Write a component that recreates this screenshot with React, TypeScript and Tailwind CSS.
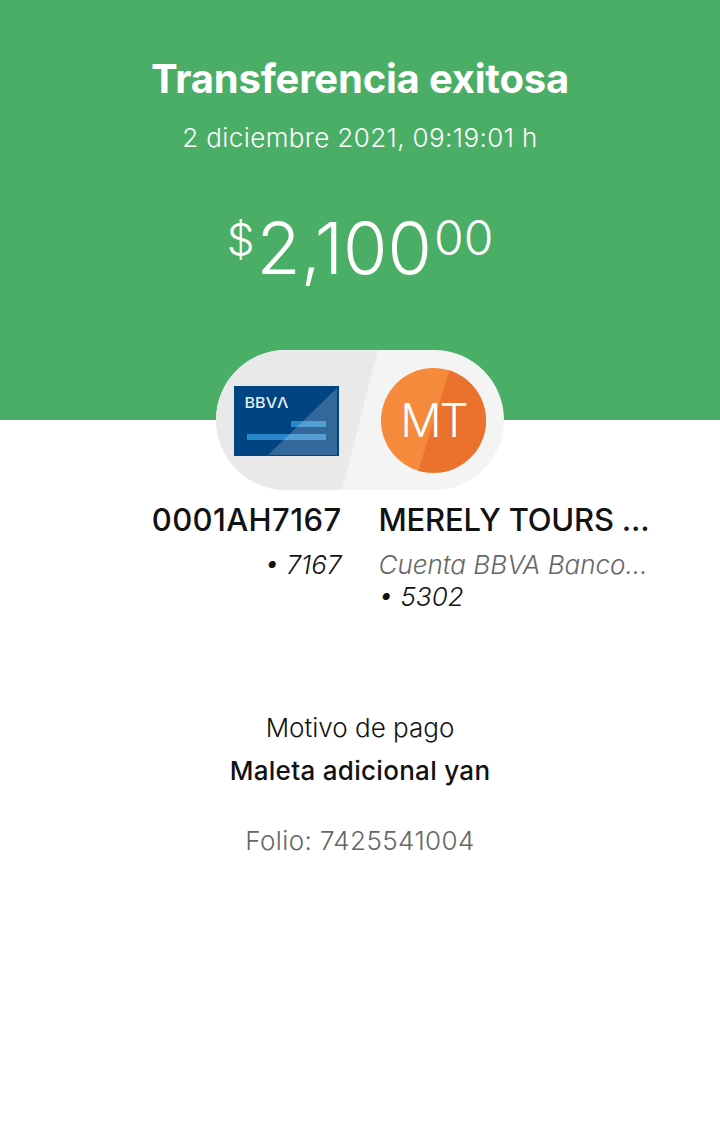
const sans = "font-['Inter','Liberation_Sans',sans-serif]";

function BankCard() {
  return (
    <svg width="105" height="70" viewBox="0 0 105 70" className="block">
      <rect width="105" height="70" fill="#004481" />
      <rect x="13" y="48" width="79" height="6" fill="#2a86ca" />
      <rect x="57" y="35" width="35" height="6" fill="#2a86ca" />
      <path d="M33 70 L103 2 V69 H33 Z" fill="#fff" fillOpacity="0.2" />
      <text x="10.5" y="22" fill="#e3edf6" fontSize="15" fontWeight="500" fontFamily="Inter, sans-serif" textLength="44" lengthAdjust="spacingAndGlyphs">
        BBVΛ
      </text>
    </svg>
  );
}

function Avatar() {
  return (
    <div className="relative flex h-[105px] w-[105px] items-center justify-center overflow-hidden rounded-full bg-[#f58a3c]">
      <div className="absolute inset-0 bg-[#ea722d] [clip-path:polygon(66%_0,100%_0,100%_100%,35%_100%)]" />
      <span className="relative text-[46px] leading-none font-light tracking-[-2px] text-white">MT</span>
    </div>
  );
}

export default function App() {
  return (
    <div className={`${sans} min-h-[1131px] bg-white text-[#121212]`}>
      <div className="h-[420px] bg-[#4bae66] pt-[57px] text-center text-white">
        <h1 className="text-[40px] leading-[44px] font-bold tracking-[-0.2px]">Transferencia exitosa</h1>
        <p className="mt-[22px] text-[26px] leading-[30px] font-light tracking-[0.4px]">2 diciembre 2021, 09:19:01 h</p>
        <div className="mt-[53px] flex items-start justify-center font-light">
          <span className="mt-[8px] text-[44px] leading-[50px]">$</span>
          <span className="ml-[2px] text-[72px] leading-[84px]">2,100</span>
          <span className="mt-[7px] ml-[2px] text-[48px] leading-[50px]">00</span>
        </div>
      </div>

      <div className="relative mx-auto -mt-[70px] flex h-[140px] w-[288px] items-center justify-between overflow-hidden rounded-[70px] bg-[#f4f4f4] px-[18px]">
        <div className="absolute inset-0 bg-[#e9e9e9] [clip-path:polygon(0_0,162px_0,126px_100%,0_100%)]" />
        <div className="relative pt-[2px]"><BankCard /></div>
        <div className="relative"><Avatar /></div>
      </div>

      <div className="mt-[11px] flex justify-center gap-[37px]">
        <div className="w-[300px] text-right">
          <div className="text-[31px] leading-[38px] font-medium tracking-[0.4px]">0001AH7167</div>
          <div className="mt-[10px] text-[26px] leading-[32px] font-light italic">• 7167</div>
        </div>
        <div className="w-[300px]">
          <div className="text-[31px] leading-[38px] font-medium tracking-[-0.2px]">MERELY TOURS ...</div>
          <div className="mt-[10px] text-[26px] leading-[32px] font-light italic text-[#666666]">Cuenta BBVA Banco...</div>
          <div className="text-[26px] leading-[32px] font-light italic">• 5302</div>
        </div>
      </div>

      <div className="mt-[99px] text-center">
        <div className="text-[26px] leading-[32px] font-light">Motivo de pago</div>
        <div className="mt-[11px] text-[26px] leading-[32px] font-medium tracking-[0.3px]">Maleta adicional yan</div>
        <div className="mt-[38px] text-[26px] leading-[32px] font-light tracking-[0.4px] text-[#666666]">Folio: 7425541004</div>
      </div>
    </div>
  );
}
